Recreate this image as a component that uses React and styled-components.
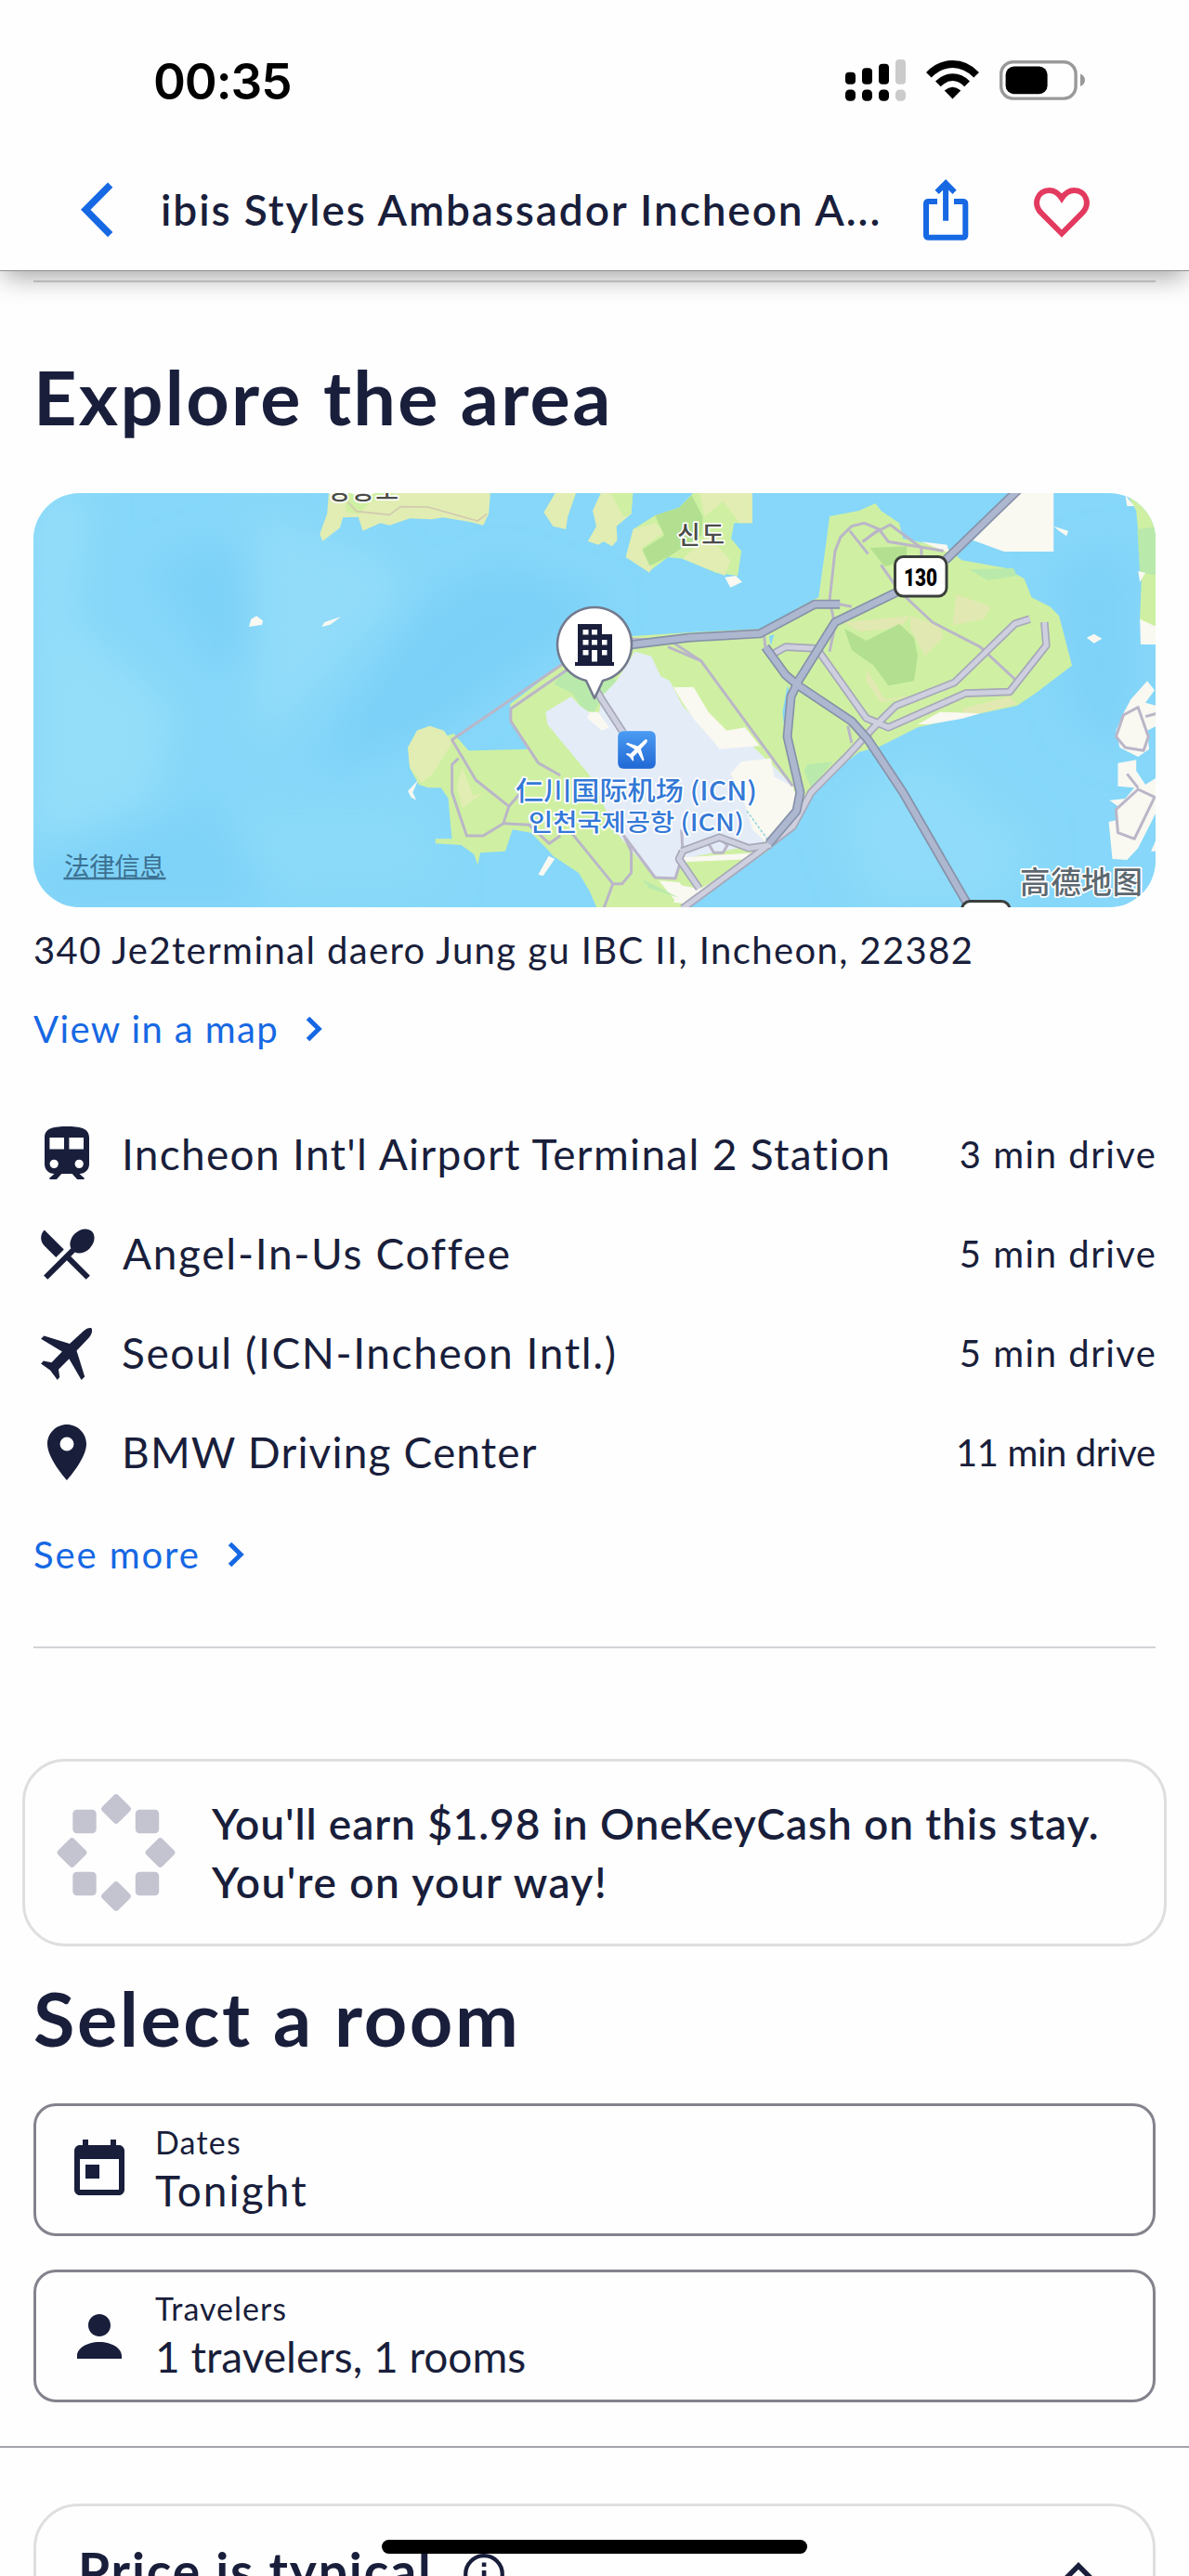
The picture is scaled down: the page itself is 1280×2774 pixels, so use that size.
import React from "react";
import styled, { createGlobalStyle } from "styled-components";

const INK = "#191e3b";
const BLUE = "#1668e3";
const BODY_FONT = `Lato, "Open Sans", sans-serif`;
const CJK_FONT = `"Noto Sans CJK SC", "Noto Sans CJK KR", sans-serif`;

const GlobalStyle = createGlobalStyle`
  *, *::before, *::after { box-sizing: border-box; }
  body { margin: 0; background: #fefefe; }
`;

const Screen = styled.div`
  position: relative;
  width: 1280px;
  height: 2774px;
  overflow: hidden;
  background: #fefefe;
  color: ${INK};
  font-family: ${BODY_FONT};
`;

const Header = styled.header`
  position: relative;
  z-index: 2;
  height: 292px;
  background: #fefefe;
  border-bottom: 1px solid #8f8f94;
  box-shadow: 0 10px 26px -4px rgba(0, 0, 0, 0.36);
`;

const StatusBar = styled.div`
  display: flex;
  align-items: center;
  height: 175px;
  padding: 0 112px 0 165px;
`;

const Clock = styled.time`
  flex: 1;
  font: 600 53px/64px Inter, sans-serif;
  letter-spacing: -1.1px;
  color: #000;
`;

const StatusIcons = styled.div`
  display: flex;
  align-items: center;
  gap: 22px;
  padding-bottom: 3px;
`;

const NavBar = styled.nav`
  display: flex;
  align-items: center;
  height: 101px;
  padding: 0 107px 0 87px;
`;

const NavTitle = styled.h1`
  flex: 1;
  margin: 0 0 0 51px;
  font-size: 46px;
  line-height: 60px;
  font-weight: 600;
  letter-spacing: 1.9px;
  white-space: nowrap;
`;

const NavActions = styled.div`
  display: flex;
  align-items: center;
  gap: 70px;
`;

const Section = styled.section`
  display: flex;
  flex-direction: column;
  margin: 0 36px;
`;

const Rule = styled.hr`
  width: ${(p) => (p.$full ? "100%" : "auto")};
  height: 2px;
  margin: ${(p) => p.$margin};
  border: 0;
  background: ${(p) => (p.$full ? "#a3a3aa" : "#d2d2d7")};
`;

const Heading = styled.h2`
  margin: ${(p) => p.$margin};
  font-size: 81px;
  line-height: 96px;
  font-weight: 700;
  letter-spacing: ${(p) => p.$tracking}px;
  white-space: nowrap;
`;

const MapFrame = styled.div`
  height: 446px;
  border-radius: 50px;
  overflow: hidden;

  svg { display: block; }
`;

const Address = styled.p`
  margin: 22px 0 0;
  font-size: 40px;
  line-height: 48px;
  letter-spacing: 1.4px;
  white-space: nowrap;
`;

const TextLink = styled.a`
  display: flex;
  align-items: center;
  gap: 28px;
  height: 48px;
  margin-top: ${(p) => p.$top}px;
  font-size: 40px;
  line-height: 48px;
  letter-spacing: ${(p) => p.$tracking}px;
  color: ${BLUE};
`;

const PlaceList = styled.ul`
  margin: 57px 0 0;
  padding: 0;
  list-style: none;
`;

const PlaceRow = styled.li`
  display: flex;
  align-items: center;
  height: 107px;
`;

const PlaceName = styled.span`
  flex: 1;
  margin-left: ${(p) => p.$indent}px;
  font-size: 46px;
  line-height: 56px;
  letter-spacing: ${(p) => p.$tracking}px;
  white-space: nowrap;
`;

const PlaceTime = styled.span`
  font-size: 40px;
  line-height: 48px;
  letter-spacing: ${(p) => p.$tracking}px;
  margin-right: ${(p) => -p.$tracking}px;
  white-space: nowrap;
`;

const RewardCard = styled.aside`
  display: flex;
  align-items: center;
  gap: 39px;
  height: 202px;
  margin: 119px 24px 0 24px;
  padding: 0 34px;
  border: 3px solid #dfdfe1;
  border-radius: 46px;
`;

const RewardText = styled.div`
  display: flex;
  flex-direction: column;
  padding-top: 1px;
`;

const RewardLine = styled.span`
  font-size: 46px;
  line-height: 62.5px;
  font-weight: 600;
  letter-spacing: ${(p) => p.$tracking}px;
  white-space: nowrap;
`;

const FieldStack = styled.div`
  display: flex;
  flex-direction: column;
  gap: 36px;
`;

const Field = styled.button`
  display: flex;
  align-items: center;
  gap: 24px;
  height: 143px;
  padding: 0 32px;
  border: 3px solid #83838d;
  border-radius: 24px;
  background: none;
  color: inherit;
  font-family: inherit;
  text-align: left;
`;

const FieldText = styled.span`
  display: flex;
  flex-direction: column;
  gap: 3px;
`;

const FieldLabel = styled.span`
  font-size: 34px;
  line-height: 42px;
  letter-spacing: ${(p) => p.$tracking}px;
`;

const FieldValue = styled.span`
  font-size: 46px;
  line-height: 56px;
  letter-spacing: ${(p) => p.$tracking}px;
`;

const PriceCard = styled.div`
  display: flex;
  align-items: flex-start;
  height: 140px;
  margin: 60px 36px 0;
  padding: 36px 62px 0 45px;
  border: 3px solid #dfdfe1;
  border-radius: 48px;
`;

const PriceTitle = styled.h3`
  margin: 0;
  font-size: 55px;
  line-height: 66px;
  font-weight: 700;
  letter-spacing: 1.9px;
  white-space: nowrap;
`;

const InfoSlot = styled.span`
  flex: 1;
  padding: 15px 0 0 33px;
`;

const ChevronSlot = styled.span`
  padding-top: 24px;
`;

const HomeIndicator = styled.div`
  position: absolute;
  z-index: 3;
  left: 411px;
  bottom: 24px;
  width: 458px;
  height: 15px;
  border-radius: 8px;
  background: #000;
`;

/* ---------- icons ---------- */

const SignalIcon = () => (
  <svg width="65" height="45" viewBox="0 0 65 45">
    {[13.7, 9.3, 4.7, 0].map((top, i) => (
      <g key={top} fill={i === 3 ? "#cbcbcb" : "#000"}>
        <rect x={i * 18} y={top} width="11" height={26.7 - top} rx="4" />
        <rect x={i * 18} y="32.5" width="11" height="12.3" rx="4.5" />
      </g>
    ))}
  </svg>
);

const WifiIcon = () => (
  <svg width="57" height="42" viewBox="0 0 57 42">
    <path d="M0 13Q12 0 28.5 0T57 13L51.3 18.5Q41 8 28.5 8T5.7 18.5Z" />
    <path d="M10 22.5Q18 14.3 28.5 14.3T47 22.5L41.3 28.3Q35 22 28.5 22T15.7 28.3Z" />
    <path d="M19.7 32.4Q28.5 25 37.3 32.4L28.5 41.5Z" />
  </svg>
);

const BatteryIcon = () => (
  <svg width="92" height="43" viewBox="0 0 92 43">
    <rect x="1.7" y="1.7" width="80.4" height="39.4" rx="13" fill="none" stroke="#999" strokeWidth="3.4" />
    <rect x="6.6" y="6.6" width="45" height="29.6" rx="9" />
    <path d="M87 14.5Q92 16.5 92 21.3T87 28Z" fill="#999" />
  </svg>
);

const BackIcon = () => (
  <svg width="35" height="60" viewBox="0 0 35 60" fill="none" stroke={BLUE} strokeWidth="7.5">
    <path d="M31.7 3.2L5.2 29.8L31.7 56.6" />
  </svg>
);

const ShareIcon = () => (
  <svg width="49" height="66" viewBox="0 0 49 66" fill="none" stroke={BLUE} strokeWidth="6">
    <path d="M15 24H5.5Q3 24 3 26.5V60Q3 62.7 5.5 62.7H42.5Q45.3 62.7 45.3 60V26.5Q45.3 24 42.5 24H33" />
    <path d="M24.1 44.7V5M14.6 13.8L24.1 4.3L33.6 13.8" />
  </svg>
);

const HeartIcon = () => (
  <svg width="60" height="60" viewBox="0 0 60 60" fill="none" stroke="#e33a5f" strokeWidth="6">
    <path d="M30 55.5L8 33.4C-1.5 23.5 4 9 16.5 9C22.5 9 26.5 12.2 30 17.5C33.5 12.2 37.5 9 43.5 9C56 9 61.5 23.5 52 33.4Z" />
  </svg>
);

const ChevronRight = () => (
  <svg width="20" height="28" viewBox="0 0 20 28" fill="none" stroke={BLUE} strokeWidth="5">
    <path d="M3.5 2.5L15.2 14L3.5 25.5" />
  </svg>
);

const GLYPH_PATHS = {
  train:
    "M12 2c-4.42 0-8 .5-8 4v9.6C4 17.5 5.5 19 7.5 19L5.8 20.5v.5h2.5l1.8-2h3.8l1.8 2h2.5v-.5L16.5 19c2 0 3.5-1.5 3.5-3.4V6c0-3.5-3.58-4-8-4zM7.4 17a1.55 1.55 0 1 1 0-3.1 1.55 1.55 0 0 1 0 3.1zM11 10.2H5.8V6H11zm5.4 6.8a1.55 1.55 0 1 1 0-3.1 1.55 1.55 0 0 1 0 3.1zm1.6-6.8h-5.2V6H18z",
  dining:
    "M8.1 13.34l2.83-2.83L3.91 3.5c-1.56 1.56-1.56 4.09 0 5.66l4.19 4.18zm6.78-1.81c1.53.71 3.68.21 5.27-1.38 1.91-1.91 2.28-4.65.81-6.12-1.46-1.46-4.2-1.1-6.12.81-1.59 1.59-2.09 3.74-1.38 5.27L3.7 19.87l1.41 1.41L12 14.41l6.88 6.88 1.41-1.41L13.41 13l1.47-1.47z",
  plane:
    "M20.8 3.1C20.2 2.8 18.9 3.2 18 4.1L13 8.7L3.8 5.8L2.7 6.9L10.3 11.5L6.5 15.4L3.6 14.8L2.7 15.8L6 18.2L8.6 21.7L9.4 20.7L9 17.9L12.8 14.1L17.2 21.7L18.4 20.5L15.5 11.2L20 6.4C21 5.3 21.3 3.8 20.8 3.1Z",
  pin:
    "M12 2C8.13 2 5 5.13 5 9c0 5.25 7 13 7 13s7-7.75 7-13c0-3.87-3.13-7-7-7zm0 9.5a2.5 2.5 0 0 1 0-5 2.5 2.5 0 0 1 0 5z",
  calendar:
    "M19 3h-1V1h-2v2H8V1H6v2H5c-1.11 0-1.99.9-1.99 2L3 19c0 1.1.89 2 2 2h14c1.1 0 2-.9 2-2V5c0-1.1-.9-2-2-2zm0 16H5V8h14v11zM7 10h5v5H7z",
  person:
    "M12 12c2.21 0 4-1.79 4-4s-1.79-4-4-4-4 1.79-4 4 1.79 4 4 4zm0 2c-4.6 0-8 2.4-8 4.9V20h16v-1.1c0-2.5-3.4-4.9-8-4.9z",
};

const GlyphSvg = styled.svg`
  flex: none;
  fill: ${INK};
`;

const Glyph = ({ name }) => (
  <GlyphSvg width="72" height="72" viewBox="0 0 24 24">
    <path fillRule="evenodd" d={GLYPH_PATHS[name]} />
  </GlyphSvg>
);

const DIAMONDS = [[64, 16], [64, 110], [16.5, 63], [111.5, 63]];
const SQUARES = [[30, 29.5], [97.5, 29.5], [30, 96.5], [97.5, 96.5]];

const RewardLogo = () => (
  <svg width="128" height="126" viewBox="0 0 128 126" fill="#c4c3d0">
    {DIAMONDS.map(([x, y]) => (
      <rect key={`${x}-${y}`} x={x - 12.2} y={y - 12.2} width="24.4" height="24.4" rx="3.5" transform={`rotate(45 ${x} ${y})`} />
    ))}
    {SQUARES.map(([x, y]) => (
      <rect key={`${x}-${y}`} x={x - 12.7} y={y - 12.7} width="25.4" height="25.4" rx="4.5" />
    ))}
  </svg>
);

const InfoIcon = () => (
  <svg width="44" height="44" viewBox="0 0 44 44">
    <circle cx="22" cy="22" r="19.8" fill="none" stroke={INK} strokeWidth="4.2" />
    <path d="M19.8 9.5H24.4V14H19.8ZM19.8 18H24.4V33H19.8Z" fill={INK} />
  </svg>
);

const ChevronUp = () => (
  <svg width="36" height="24" viewBox="0 0 36 24" fill="none" stroke={INK} strokeWidth="5.5">
    <path d="M2 20L18 4L34 20" />
  </svg>
);

/* ---------- map ---------- */

const MapSvg = styled.svg`
  .scaled path { vector-effect: non-scaling-stroke; fill: none; stroke-linejoin: round; }
  .land path { stroke: none; }
  .land .green { fill: #cff0a2; }
  .land .leaf { fill: #b2e090; }
  .land .mint { fill: #b9eaab; }
  .land .sand { fill: #e1edb2; }
  .land .tan { fill: #e1e8b1; }
  .land .cream { fill: #f9f8f1; }
  .land .apron { fill: #e4ecf8; }
  .land .sea { fill: #86d6f9; }
`;

const MapLabel = styled.text`
  font-family: ${CJK_FONT};
  font-size: ${(p) => p.$size}px;
  font-weight: ${(p) => p.$weight || 500};
  fill: ${(p) => p.$color};
  paint-order: stroke;
  stroke: ${(p) => (p.$plain ? "none" : "#fff")};
  stroke-width: 3.5px;
  stroke-linejoin: round;
`;

const HIGHWAYS = [
  "M90,524L255,500L450,487L600,392L668,392",
  "M1160,15L955,250",
  "M840,345L820,355L655,450L555,640L535,690L525,820L560,1000L550,1060L475,1165",
  "M465,530L520,620L555,655L700,770L745,830L840,1000L1015,1360",
];

const ROADS = [
  "M490,550L520,530L605,535L740,760L800,790L1010,680L1130,675L1230,525L1225,450",
  "M1185,440L1145,455L980,645L820,720L760,790L690,880L590,1000L540,1110L440,1200L240,1375",
  "M5,670L20,700L80,810",
  "M237,1190L340,1145L420,1180L480,1170",
  "M240,1190L230,1215L285,1310",
];

const LANES = [
  "M640,380L655,220L670,175L700,140L735,130L775,150L730,190",
  "M730,190L765,160L805,135L890,210L890,235",
  "M775,150L800,190L950,220",
  "M695,155L745,230M780,265L830,350L920,450L1050,530L1145,635",
  "M640,380L655,460L640,545",
  "M100,505L200,508M200,530L290,575L540,980",
  "M200,505L290,575",
  "M-80,580L-388,830L-323,960L-233,1045L-248,1100L-303,1140L-348,1140L-388,1000L-388,910L-370,890",
  "M-70,600L-228,730L-228,770L-153,905L-93,945",
  "M-248,1100L-178,1105L-123,1165L-93,1140M-233,1045L-200,1000",
  "M-63,1130L50,1295L75,1295L100,1260L100,1190L80,1140L165,1275L220,1278L235,1220",
  "M50,1295L25,1375M237,1120L240,1190",
  "M690,785L700,840M460,475L465,530M700,400L668,392",
  "M310,1165L340,1148L362,1170L350,1195L325,1195Z",
  "M1480,725L1440,750L1420,820L1445,855L1495,865L1508,820Z",
  "M1500,755L1530,745M1450,940L1480,985",
  "M1525,1015L1480,990L1420,1055L1425,1130L1470,1150Z",
];

const AreaMap = () => (
  <MapSvg width="1208" height="446" viewBox="0 0 1208 446">
    <defs>
      <filter id="soft" x="-30%" y="-30%" width="160%" height="160%">
        <feGaussianBlur stdDeviation="22" />
      </filter>
      <linearGradient id="airport" x1="0" y1="0" x2="0" y2="1">
        <stop offset="0" stopColor="#4b9cf3" />
        <stop offset="1" stopColor="#2068d4" />
      </linearGradient>
    </defs>
    <rect width="1208" height="446" fill="#86d7f9" />
    <g filter="url(#soft)">
      <path d="M0 0H60L40 140L150 230L130 330L0 380Z" fill="#94def9" />
      <path d="M130 80L230 50L240 180L200 190Z" fill="#7cd1f8" />
      <path d="M230 20L380 70L400 110L330 180L240 280Z" fill="#92dcf9" />
      <path d="M500 80L620 120L420 260L300 300L420 120Z" fill="#7ad0f8" />
      <path d="M200 340L420 340L440 420L220 440Z" fill="#8bdaf9" />
      <path d="M0 400L200 330L260 446H0Z" fill="#7fd3f8" />
      <path d="M860 340L960 280L1080 380L1040 446L900 446Z" fill="#8fdbf9" />
      <path d="M1100 80L1180 60L1180 280L1120 240Z" fill="#7ed2f8" />
    </g>

    <g className="scaled land" transform="translate(604 -11) scale(0.3954 0.33333)">
      <path className="sand" d="M-723,25L-728,100L-748,165L-740,188L-693,145L-685,112L-643,110L-631,155L-583,130L-558,137L-503,115L-443,118L-413,112L-343,125L-303,137L-288,100L-283,25Z" />
      <path className="green" d="M-680,25L-675,95L-640,100L-610,60L-560,55L-540,25Z" />
      <path className="sand" d="M-103,25L-138,95L-113,140L-78,150L-73,110L-48,25Z" />
      <path className="sand" d="M-5,90L20,25L105,25L100,100L60,140L62,185L48,205L25,190L10,200L-18,188L5,140Z" />
      <path className="green" d="M40,25H105L100,100L80,110Z" />
      <path className="green" d="M275,25H430V130H380L372,180L400,220L390,300L330,290L240,245L200,240L150,285L120,260L105,150L165,105L230,80Z" />
      <path className="sand" d="M285,25H430V130H395L350,60L300,110ZM105,150L165,130L190,160L130,210L158,270L150,290L85,240ZM240,245L310,170L370,250L355,300Z" />
      <path className="leaf" d="M265,40L295,110L290,170L200,240L150,268L130,215L190,170L165,105L230,80Z" />
      <path className="cream" d="M355,305L385,300L402,320L370,338Z" />

      <path className="green" d="M-448,785L-483,800L-508,855L-503,920L-478,975L-453,985L-418,985L-398,1020L-393,1090L-388,1150L-433,1150V1165L-363,1170L-328,1200L-318,1235L-311,1195L-243,1190L-223,1120L-173,1130L-123,1190L-113,1205L-43,1260L-13,1320L7,1375H240L470,1190L560,1060L600,980L720,870L780,850L880,790L1010,755L1150,720L1200,680L1300,590L1265,430L1240,400L1190,370L1170,310L1120,275L1000,250L960,210L880,190L840,180L830,130L780,90L765,66L720,90L640,108L630,200L610,370L560,400L470,470L270,482L105,495L0,480L-80,580L-230,715L-228,765L-183,860L-343,865L-383,810L-410,820Z" />
      <path className="sand" d="M-448,785L-483,800L-508,855L-503,920L-470,970L-440,940L-388,840L-410,800ZM-360,920L-330,1010L-300,1000L-360,1050L-375,980Z" />
      <path className="mint" d="M-75,590L0,570L60,640L20,690L0,740L-30,735L-60,680L-110,650Z" />
      <path className="apron" d="M-63,690L-133,740L-128,780L-13,945L60,1130L160,1270L220,1278L235,1215L440,1170L480,1150L540,980L500,930L430,850L330,830L240,720L205,640L180,625L155,560L110,545L60,640L20,690L10,760L-15,740L-40,720Z" />
      <path className="cream" d="M215,660L270,660L310,740L360,800L410,790L450,850L340,860L320,830L275,770L240,710ZM400,900L480,890L490,950L540,980L562,1060L470,1165L430,1120L400,1000L370,940ZM-13,740L10,740L40,790L20,800L-20,760ZM235,1210L440,1195L250,1360L215,1355L235,1300L280,1310ZM175,1285L230,1290L270,1340L220,1350Z" />
      <path className="green" d="M245,1225L430,1215L290,1310Z" />
      <path className="mint" d="M130,1280L230,1340L150,1310ZM580,910L650,900L590,985L570,930ZM1020,280L1140,275L1150,300L1070,315Z" />
      <path className="sea" d="M525,655L512,740L520,830L535,690ZM475,495L490,490L480,525Z" />
      <path className="tan" d="M860,430L940,460L950,500L900,560L860,470ZM985,360L1080,400L1060,440L975,460ZM680,450L860,430L830,470L720,480ZM740,600L790,700L900,680L780,710L740,640ZM1000,730L1130,690L1150,715L1010,755Z" />
      <path className="leaf" d="M680,470L740,510L830,455L870,500L880,560L870,640L800,655L760,590L700,540ZM750,210L850,205L850,250L790,270Z" />
      <path className="cream" d="M880,780L940,740L1050,745L1000,762L910,780ZM890,190L960,200L965,225L920,205Z" />

      <path className="cream" d="M1165,25H1250V222H1115L1030,185ZM-941,465L-935,440L-920,430L-903,445L-905,458ZM-743,465L-735,450L-690,432L-720,458ZM-508,995L-480,960L-495,1000L-485,1025L-500,1015ZM-125,1205L-108,1215L-140,1270L-153,1265ZM1250,140L1290,155L1285,172L1265,155ZM1340,500L1360,488L1382,503L1360,518Z" />
      <path className="green" d="M1445,25H1540V520L1485,440L1490,290L1475,90Z" />
      <path className="mint" d="M1478,150L1540,140V300L1485,290Z" />
      <path className="cream" d="M1445,40L1470,75L1450,75ZM1480,285L1500,290L1485,320ZM1485,440L1540,470V522H1487ZM1505,640L1525,670L1500,710L1530,720L1540,780L1505,800L1510,860L1480,885L1430,855L1420,800L1440,745L1460,700ZM1425,905L1475,895L1475,930L1500,975L1540,945V1040L1480,1180L1450,1218L1410,1215L1400,1095L1420,1090L1425,1045L1402,1025L1445,1020L1470,985L1425,980ZM1530,1150L1540,1190H1515Z" />
    </g>

    <g className="scaled" transform="translate(604 -11) scale(0.3954 0.33333)">
      <path d="M-673,60L-648,92L-558,103L-528,77L-453,78L-318,123L-293,100" stroke="#d2c9b0" strokeWidth="1.6" />
      <path d="M415,1060L470,1150" stroke="#8fd5dc" strokeWidth="1.5" strokeDasharray="3 2" />
      {LANES.map((d) => <path key={d} d={d} stroke="#bab6c8" strokeWidth="3" />)}
      {ROADS.map((d) => <path key={d} d={d} stroke="#a7a8ba" strokeWidth="8.6" />)}
      {ROADS.map((d) => <path key={d} d={d} stroke="#ced0df" strokeWidth="5.2" />)}
      {HIGHWAYS.map((d) => <path key={d} d={d} stroke="#8792a9" strokeWidth="10" />)}
      {HIGHWAYS.map((d) => <path key={d} d={d} stroke="#adb7d0" strokeWidth="6.6" />)}
    </g>

    <MapLabel x="317" y="7" $size={27} $color="#4b4d48" textLength="76">장봉도</MapLabel>
    <MapLabel x="693" y="55" $size={27} $color="#4b4d48" textLength="51">신도</MapLabel>

    <rect x="927.5" y="68.5" width="55.5" height="42.5" rx="9" fill="#fff" stroke="#3b3f3c" strokeWidth="3" />
    <text x="937" y="99.6" fontSize="25" textLength="36" lengthAdjust="spacingAndGlyphs" fontFamily="Roboto, sans-serif" fontWeight="900">130</text>
    <rect x="999.5" y="439.5" width="51.5" height="42" rx="9" fill="#fff" stroke="#3b3f3c" strokeWidth="3" />

    <path d="M595 202A40 40 0 1 1 613 202L604 221Z" fill="#fff" stroke="#737a8e" strokeWidth="2.6" strokeLinejoin="round" />
    <path
      fillRule="evenodd"
      fill={INK}
      d="M586 141H612V152H623V182H625V186H583V182H586ZM591.5 147V152.5H597.5V147ZM601 147V152.5H607V147ZM591.5 158V163.5H597.5V158ZM601 158V163.5H607V158ZM591.5 169V174.5H597.5V169ZM601 169V181.5H607V169ZM612 158V163.5H617.5V158ZM612 169V174.5H617.5V169Z"
    />

    <rect x="629" y="256" width="41" height="41" rx="6" fill="url(#airport)" stroke="#fff" strokeOpacity=".35" />
    <g transform="translate(634.5 261.5) scale(1.25)">
      <path d={GLYPH_PATHS.plane} fill="#fff" />
    </g>
    <MapLabel x="519" y="331" $size={28} $color="#3479d6" textLength="260" lengthAdjust="spacingAndGlyphs">仁川国际机场 (ICN)</MapLabel>
    <MapLabel x="533" y="363.500" $size={26} $color="#3479d6" textLength="232" lengthAdjust="spacingAndGlyphs">인천국제공항 (ICN)</MapLabel>

    <MapLabel x="33" y="411.500" $size={27.5} $weight={400} $color="#3c7192" $plain textLength="109">法律信息</MapLabel>
    <path d="M32.500 415H142.500" stroke="#3c7192" strokeWidth="2.500" />
    <MapLabel x="1062" y="431" $size={32.5} $weight={500} $color="#5c6870" textLength="132">高德地图</MapLabel>
  </MapSvg>
);

/* ---------- page ---------- */

const PLACES = [
  { icon: "train", name: "Incheon Int'l Airport Terminal 2 Station", tracking: 1.3, indent: 23, time: "3 min drive", timeTracking: 1.5 },
  { icon: "dining", name: "Angel-In-Us Coffee", tracking: 1.7, indent: 24, time: "5 min drive", timeTracking: 1.5 },
  { icon: "plane", name: "Seoul (ICN-Incheon Intl.)", tracking: 1.6, indent: 23, time: "5 min drive", timeTracking: 1.5 },
  { icon: "pin", name: "BMW Driving Center", tracking: 1.15, indent: 23, time: "11 min drive", timeTracking: -0.4 },
];

export default function App() {
  return (
    <Screen>
      <GlobalStyle />
      <Header>
        <StatusBar>
          <Clock>00:35</Clock>
          <StatusIcons>
            <SignalIcon />
            <WifiIcon />
            <BatteryIcon />
          </StatusIcons>
        </StatusBar>
        <NavBar>
          <BackIcon />
          <NavTitle>ibis Styles Ambassador Incheon A...</NavTitle>
          <NavActions>
            <ShareIcon />
            <HeartIcon />
          </NavActions>
        </NavBar>
      </Header>

      <Section>
        <Rule $margin="10px 0 75px" />
        <Heading $margin="0 0 56px" $tracking={2.3}>Explore the area</Heading>
        <MapFrame>
          <AreaMap />
        </MapFrame>
        <Address>340 Je2terminal daero Jung gu IBC II, Incheon, 22382</Address>
        <TextLink $top={37} $tracking={1.4}>
          View in a map
          <ChevronRight />
        </TextLink>
        <PlaceList>
          {PLACES.map((place) => (
            <PlaceRow key={place.name}>
              <Glyph name={place.icon} />
              <PlaceName $tracking={place.tracking} $indent={place.indent}>{place.name}</PlaceName>
              <PlaceTime $tracking={place.timeTracking}>{place.time}</PlaceTime>
            </PlaceRow>
          ))}
        </PlaceList>
        <TextLink $top={33} $tracking={1.9}>
          See more
          <ChevronRight />
        </TextLink>
        <Rule $margin="75px 0 0" />
      </Section>

      <RewardCard>
        <RewardLogo />
        <RewardText>
          <RewardLine $tracking={0.9}>You'll earn $1.98 in OneKeyCash on this stay.</RewardLine>
          <RewardLine $tracking={1.5}>You're on your way!</RewardLine>
        </RewardText>
      </RewardCard>

      <Section>
        <Heading $margin="29px 0 44px" $tracking={2.6}>Select a room</Heading>
        <FieldStack>
          <Field>
            <Glyph name="calendar" />
            <FieldText>
              <FieldLabel $tracking={1.2}>Dates</FieldLabel>
              <FieldValue $tracking={2.1}>Tonight</FieldValue>
            </FieldText>
          </Field>
          <Field>
            <Glyph name="person" />
            <FieldText>
              <FieldLabel $tracking={1}>Travelers</FieldLabel>
              <FieldValue $tracking={0}>1 travelers, 1 rooms</FieldValue>
            </FieldText>
          </Field>
        </FieldStack>
      </Section>
      <Rule $full $margin="47px 0 0" />
      <PriceCard>
        <PriceTitle>Price is typical</PriceTitle>
        <InfoSlot>
          <InfoIcon />
        </InfoSlot>
        <ChevronSlot>
          <ChevronUp />
        </ChevronSlot>
      </PriceCard>
      <HomeIndicator />
    </Screen>
  );
}
